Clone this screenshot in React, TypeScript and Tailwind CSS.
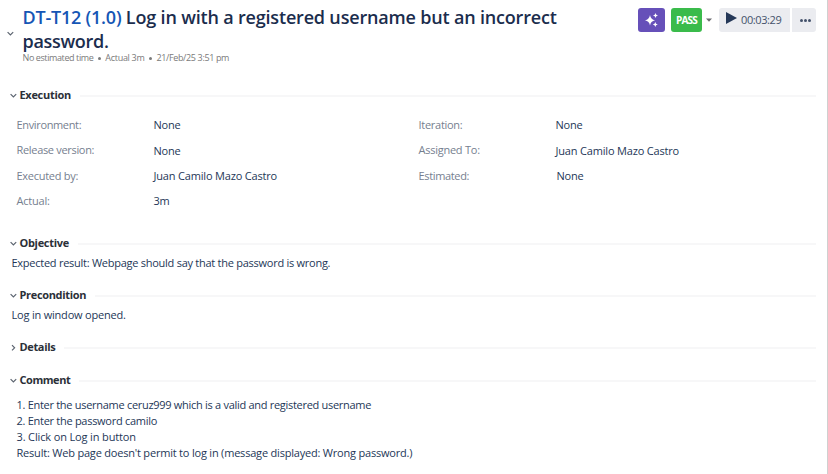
import type { ReactNode } from 'react';

function Chevron({ closed = false }: { closed?: boolean }) {
  return (
    <svg width="7" height="7" viewBox="0 0 7 7" fill="none" stroke="#5c6470" strokeWidth="1.2" className="shrink-0">
      <path d={closed ? 'M2 1.2 4.6 3.8 2 6.4' : 'M0.6 2.2 3.4 5 6.2 2.2'} />
    </svg>
  );
}

function Heading({ title, closed, spacing }: { title: string; closed?: boolean; spacing: string }) {
  return (
    <div className="flex h-4 items-center pl-[9.5px] pr-[11px]">
      <Chevron closed={closed} />
      <h2 className={`ml-[3px] whitespace-nowrap text-[11px] leading-4 font-bold text-[#2b3038] ${spacing}`}>{title}</h2>
      <div className="ml-[9px] mt-px h-[2px] flex-1 bg-[#f7f7f8]" />
    </div>
  );
}

function Field({ label, children, spacing = '', inset = '' }: { label: string; children: ReactNode; spacing?: string; inset?: string }) {
  return (
    <div className="flex h-[25.4px] items-start whitespace-nowrap leading-4">
      <span className={`w-[137px] shrink-0 text-[#76808f] ${spacing}`}>{label}</span>
      <span className={`tracking-[-0.18px] ${inset}`}>{children}</span>
    </div>
  );
}

export default function App() {
  return (
    <main className="h-[474px] w-[828px] overflow-hidden border-r border-[#d0d0d0] bg-white font-['Open_Sans','Noto_Sans',sans-serif] text-[11px] text-[#243757]">
      <header className="flex h-[87px] items-start">
        <div className="mt-[30px] ml-[6.5px] w-[16px]">
          <Chevron />
        </div>
        <div className="w-[560px] pt-[5px]">
          <h1 className="whitespace-nowrap text-[18px] leading-6 font-semibold tracking-[-0.18px] text-[#1b2d4d]">
            <span className="tracking-[-0.22px] text-[#1556b5]">DT-T12 (1.0)</span> Log in with a registered username but an incorrect
            <br />
            <span className="tracking-[-0.3px]">password.</span>
          </h1>
          <p className="flex h-[10px] items-center whitespace-nowrap text-[9px] leading-[10px] text-[#7a7a7a]">
            <span className="tracking-[-0.4px]">No estimated time</span>
            <i className="mr-1 ml-[5px] size-[3px] rounded-full bg-[#7a7a7a]" />
            <span className="tracking-[-0.3px]">Actual 3m</span>
            <i className="mr-1 ml-[5px] size-[3px] rounded-full bg-[#7a7a7a]" />
            <span className="tracking-[-0.36px]">21/Feb/25 3:51 pm</span>
          </p>
        </div>
        <div className="mt-2 ml-auto mr-[11px] flex h-6 items-center">
          <button className="flex h-6 w-[27px] items-center justify-center rounded-[3px] bg-[#6650b9]">
            <svg width="15" height="16" viewBox="0 0 15 16" fill="white">
              <path d="M6 3 Q6.7 7.4 11 8.3 Q6.7 9.2 6 13.5 Q5.3 9.2 1 8.3 Q5.3 7.4 6 3Z" />
              <path d="M11.5 1 Q11.8 3.1 14 3.5 Q11.8 3.9 11.5 6 Q11.2 3.9 9 3.5 Q11.2 3.1 11.5 1Z" />
              <path d="M11.3 10 Q11.6 12.1 13.8 12.5 Q11.6 12.9 11.3 15 Q11 12.9 8.8 12.5 Q11 12.1 11.3 10Z" />
            </svg>
          </button>
          <button className="ml-[6px] h-6 w-[31px] rounded-[3px] bg-[#3abb4b] text-[10px] font-bold tracking-[-0.8px] text-white">PASS</button>
          <svg width="6" height="4" viewBox="0 0 6 4" fill="#6c6c70" className="ml-1">
            <path d="M0 0.5H6L3 3.8Z" />
          </svg>
          <button className="ml-[7px] flex h-6 w-[71px] items-center rounded-l-[3px] bg-[#ebecf0] pl-[7px] text-[#44526b]">
            <svg width="11" height="12" viewBox="0 0 11 12" fill="#253858" className="-mt-[5px]">
              <path d="M0 0 11 6 0 12Z" />
            </svg>
            <span className="ml-1 text-[11px] tracking-[-0.4px]">00:03:29</span>
          </button>
          <button className="ml-[2px] flex h-6 w-6 items-center justify-center gap-px rounded-r-[3px] bg-[#ebecf0] pl-[2px]">
            <i className="size-[3px] rounded-full bg-[#44526b]" />
            <i className="size-[3px] rounded-full bg-[#44526b]" />
            <i className="size-[3px] rounded-full bg-[#44526b]" />
          </button>
        </div>
      </header>

      <section className="h-[148px]">
        <Heading title="Execution" spacing="tracking-[-0.3px]" />
        <div className="mt-[14px] flex pl-[16.5px]">
          <div className="w-[402px]">
            <Field label="Environment:" spacing="tracking-[-0.35px]">None</Field>
            <Field label="Release version:" spacing="tracking-[-0.32px]" inset="pt-px">None</Field>
            <Field label="Executed by:" spacing="tracking-[-0.28px]">Juan Camilo Mazo Castro</Field>
            <Field label="Actual:" spacing="tracking-[-0.2px]">3m</Field>
          </div>
          <div>
            <Field label="Iteration:" spacing="tracking-[-0.28px]">None</Field>
            <Field label="Assigned To:" spacing="tracking-[-0.25px]" inset="pt-px">Juan Camilo Mazo Castro</Field>
            <Field label="Estimated:" spacing="tracking-[-0.35px]" inset="ml-px">None</Field>
          </div>
        </div>
      </section>

      <section className="h-[52px]">
        <Heading title="Objective" spacing="tracking-[-0.3px]" />
        <p className="mt-1 pl-[11.5px] leading-4 tracking-[-0.26px]">Expected result: Webpage should say that the password is wrong.</p>
      </section>
      <section className="h-[52px]">
        <Heading title="Precondition" spacing="tracking-[-0.33px]" />
        <p className="mt-1 pl-[11.5px] leading-4 tracking-[-0.2px]">Log in window opened.</p>
      </section>
      <section className="h-[33px]">
        <Heading title="Details" closed spacing="tracking-[-0.35px]" />
      </section>
      <section>
        <Heading title="Comment" spacing="tracking-[-0.45px]" />
        <div className="mt-[9px] pl-[16.5px] leading-4">
          <p className="tracking-[-0.29px]">1. Enter the username ceruz999 which is a valid and registered username</p>
          <p className="tracking-[-0.28px]">2. Enter the password camilo</p>
          <p className="tracking-[-0.14px]">3. Click on Log in button</p>
          <p className="tracking-[-0.2px]">Result: Web page doesn't permit to log in (message displayed: Wrong password.)</p>
        </div>
      </section>
    </main>
  );
}
